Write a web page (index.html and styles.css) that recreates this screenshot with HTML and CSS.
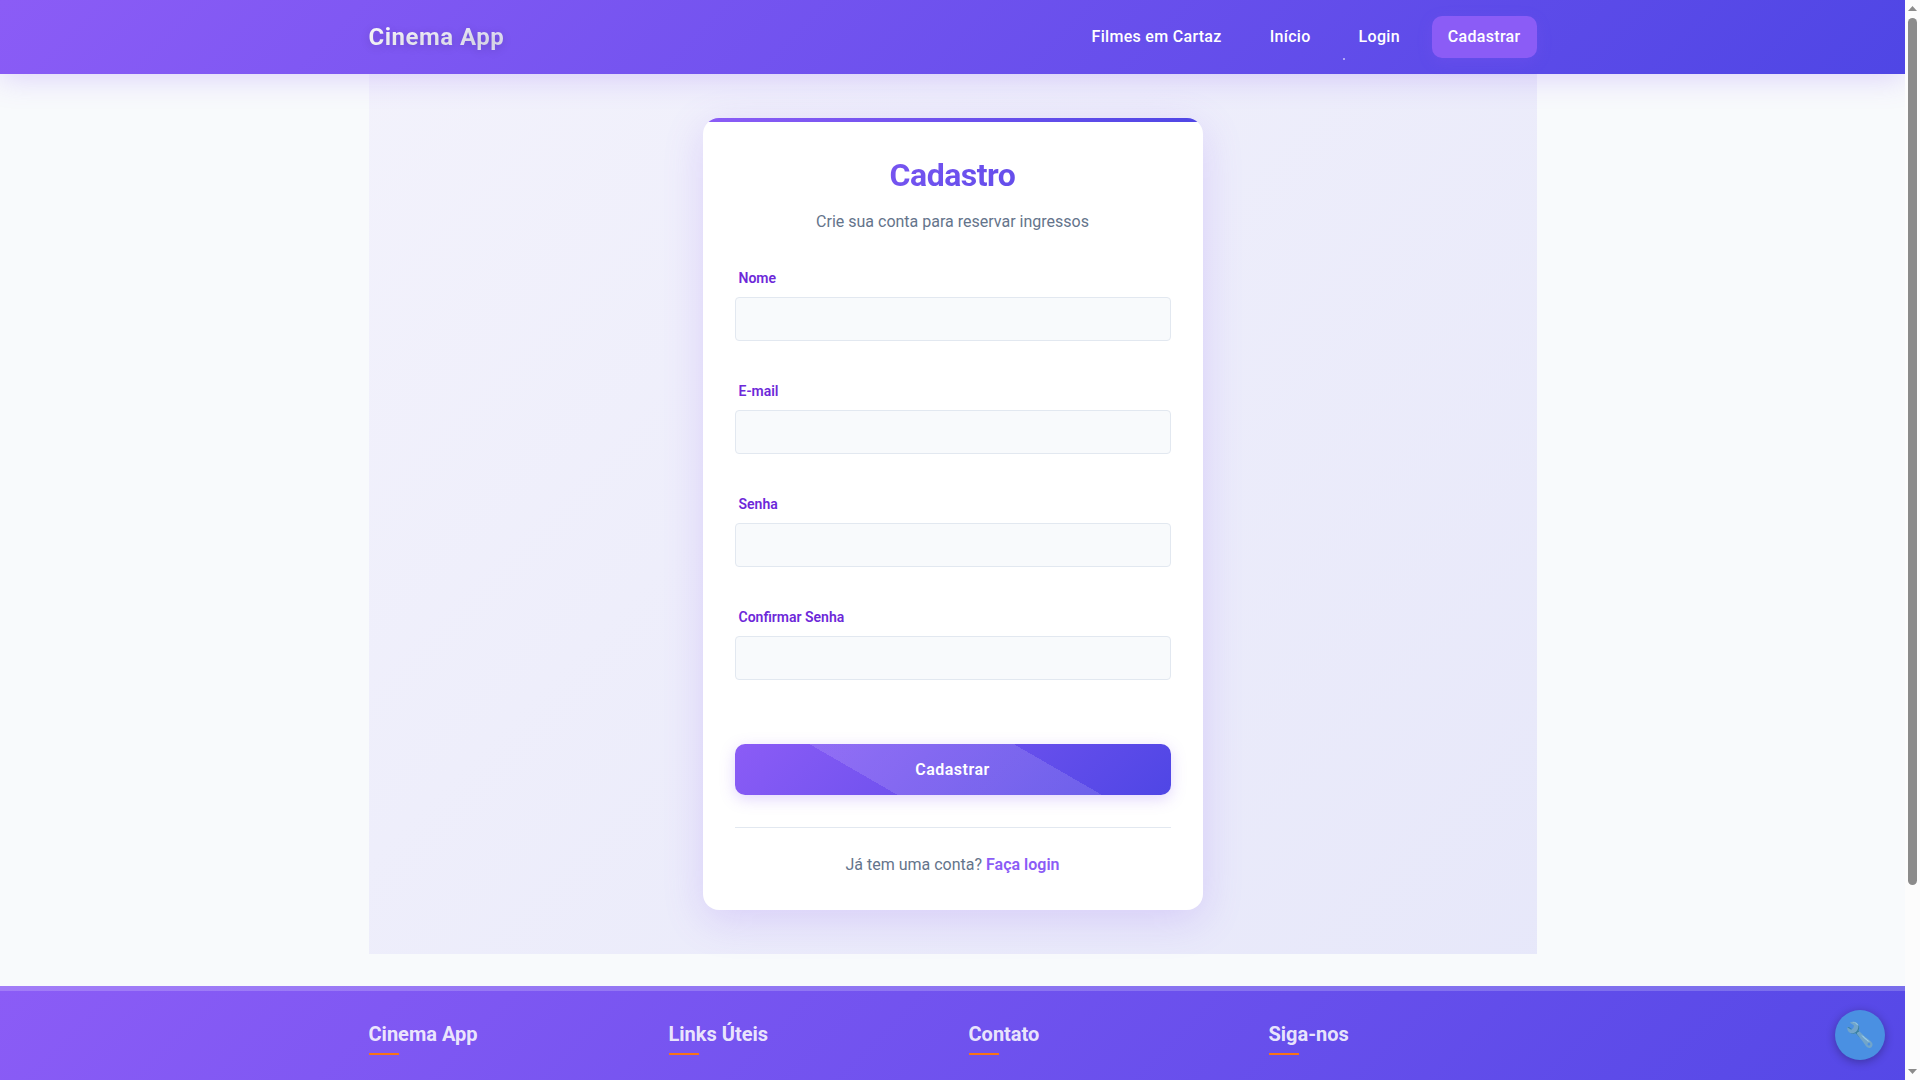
FILE: index.html
```html
<!DOCTYPE html>
<html lang="pt-BR">
<head>
<meta charset="utf-8">
<meta name="viewport" content="width=device-width, initial-scale=1">
<title>Cadastro - Cinema App</title>
<link rel="stylesheet" href="styles.css">
</head>
<body>
<header class="header">
  <div class="container header-inner">
    <a class="logo" href="#">Cinema App</a>
    <nav class="nav">
      <a class="nav-link" href="#">Filmes em Cartaz</a>
      <a class="nav-link" href="#">Início</a>
      <a class="nav-link nav-login" href="#">Login</a>
      <a class="nav-link nav-register" href="#">Cadastrar</a>
    </nav>
  </div>
</header>
<div class="container content">
  <main class="auth">
    <section class="card">
      <h1 class="title">Cadastro</h1>
      <p class="subtitle">Crie sua conta para reservar ingressos</p>
      <form class="form">
        <div class="field"><label for="nome">Nome</label><input id="nome" type="text"></div>
        <div class="field"><label for="email">E-mail</label><input id="email" type="email"></div>
        <div class="field"><label for="senha">Senha</label><input id="senha" type="password"></div>
        <div class="field"><label for="confirmar">Confirmar Senha</label><input id="confirmar" type="password"></div>
        <button class="submit" type="submit">Cadastrar</button>
      </form>
      <p class="switch">Já tem uma conta? <a href="#">Faça login</a></p>
    </section>
  </main>
</div>
<footer class="footer">
  <div class="container footer-grid">
    <h3>Cinema App</h3>
    <h3>Links Úteis</h3>
    <h3>Contato</h3>
    <h3>Siga-nos</h3>
  </div>
</footer>
<button class="tools" type="button" aria-label="Ferramentas"><span>🔧</span></button>
<div class="scrollbar" aria-hidden="true">
  <svg class="scroll-arrow" viewBox="0 0 9 5"><path d="M4.500 0L9 5H0z"/></svg>
  <div class="scroll-track"><div class="scroll-thumb"></div></div>
  <svg class="scroll-arrow" viewBox="0 0 9 5"><path d="M0 0h9L4.500 5z"/></svg>
</div>
</body>
</html>
```
FILE: styles.css
```css
:root {
  --primary: #8b5cf6;
  --secondary: #4f46e5;
  --brand: linear-gradient(135deg, var(--primary), var(--secondary));
}
* { box-sizing: border-box; margin: 0; padding: 0; }
html { scrollbar-width: none; }
body {
  padding-right: 15px;
  background: #f8fafc;
  color: #64748b;
  font: 16px/26px Roboto, "Liberation Sans", sans-serif;
}
a { color: inherit; text-decoration: none; }
.container { width: 100%; max-width: 1200px; margin: 0 auto; padding: 0 16px; }

.header {
  position: relative;
  z-index: 1;
  padding: 16px 0;
  background: var(--brand);
  box-shadow: 0 4px 30px rgba(139, 92, 246, 0.25);
}
.header-inner { display: flex; align-items: center; justify-content: space-between; }
.logo {
  font-size: 24px;
  font-weight: 700;
  letter-spacing: 0.5px;
  color: transparent;
  background: linear-gradient(135deg, #fff, #e2e0f5);
  -webkit-background-clip: text;
  background-clip: text;
  text-shadow: 0 2px 10px rgba(0, 0, 0, 0.15);
}
.nav { display: flex; gap: 16px; }
.nav-link {
  position: relative;
  padding: 8px 16px;
  border-radius: 10px;
  color: #fff;
  font-weight: 500;
  letter-spacing: 0.3px;
}
.nav-login::after {
  content: "";
  position: absolute;
  left: 0;
  bottom: -2px;
  width: 2px;
  height: 2px;
  background: rgba(255, 255, 255, 0.5);
}
.nav-register { background: var(--primary); box-shadow: 0 4px 15px rgba(139, 92, 246, 0.2); }

.auth {
  display: flex;
  justify-content: center;
  padding: 44px 16px;
  background: linear-gradient(135deg, rgba(139, 92, 246, 0.05), rgba(79, 70, 229, 0.1));
}
.card {
  position: relative;
  width: 100%;
  max-width: 500px;
  padding: 32px;
  border-radius: 16px;
  background: linear-gradient(90deg, var(--primary), var(--secondary)) top / 100% 4px no-repeat #fff;
  box-shadow: 0 10px 40px rgba(139, 92, 246, 0.2);
  text-align: center;
}
.title {
  margin-bottom: 8px;
  font-size: 32px;
  line-height: 51px;
  letter-spacing: -0.5px;
  color: transparent;
  background: var(--brand);
  -webkit-background-clip: text;
  background-clip: text;
}
.subtitle { margin-bottom: 32px; }
.form { display: flex; flex-direction: column; text-align: left; }
.field { display: flex; flex-direction: column; gap: 8px; margin-bottom: 39px; }
.field label {
  padding-left: 4px;
  font-size: 14px;
  line-height: 22px;
  font-weight: 600;
  color: #6d28d9;
}
.field input {
  width: 100%;
  height: 44px;
  padding: 0 16px;
  border: 1px solid #e2e8f0;
  border-radius: 4px;
  background: #f8fafc;
  font: inherit;
}
.submit {
  margin-top: 25px;
  padding: 16px;
  border: 0;
  border-radius: 10px;
  background:
    linear-gradient(30deg, transparent 31%, rgba(255, 255, 255, 0.13) 31%, rgba(255, 255, 255, 0.13) 70%, transparent 70%),
    var(--brand);
  box-shadow: 0 4px 15px rgba(139, 92, 246, 0.25);
  color: #fff;
  font: 600 16px/19px Roboto, "Liberation Sans", sans-serif;
  letter-spacing: 0.5px;
}
.switch { margin-top: 32px; padding-top: 24px; border-top: 1px solid #e2e8f0; }
.switch a { color: var(--primary); font-weight: 600; }

.footer {
  min-height: 314px;
  margin-top: 32px;
  border-top: 5px solid rgba(255, 255, 255, 0.2);
  padding-top: 27px;
  background: var(--brand) border-box;
}
.footer-grid { display: grid; grid-template-columns: repeat(4, 1fr); gap: 32px; }
.footer h3 { font-size: 20px; line-height: 32px; font-weight: 700; color: rgba(255, 255, 255, 0.87); }
.footer h3::after { content: ""; display: block; width: 30px; height: 2px; margin-top: 3px; background: #f97316; }

.tools {
  position: fixed;
  right: 35px;
  bottom: 20px;
  z-index: 2;
  width: 50px;
  height: 50px;
  border: 0;
  border-radius: 50%;
  background: #4a90e2;
  box-shadow: 0 2px 10px rgba(0, 0, 0, 0.3);
  font-size: 24px;
  line-height: 50px;
}
.tools span { opacity: 0.7; }

.scrollbar {
  position: fixed;
  inset: 0 0 0 auto;
  z-index: 3;
  display: flex;
  flex-direction: column;
  align-items: center;
  gap: 7px;
  width: 15px;
  padding: 6px 0;
  background: #fcfcfc;
}
.scroll-arrow { width: 9px; height: 5px; fill: #8b8b8b; }
.scroll-track { flex: 1; width: 9px; }
.scroll-thumb { height: 83%; border-radius: 5px; background: #8b8b8b; }
```
